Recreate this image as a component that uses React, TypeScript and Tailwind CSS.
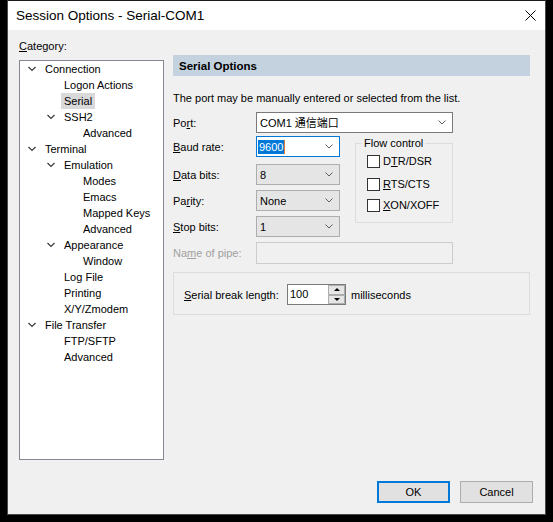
import React from 'react';

type TreeItem = { label: string; level: 0 | 1 | 2; chevron?: boolean; selected?: boolean };

const tree: TreeItem[] = [
    { label: 'Connection', level: 0, chevron: true },
    { label: 'Logon Actions', level: 1 },
    { label: 'Serial', level: 1, selected: true },
    { label: 'SSH2', level: 1, chevron: true },
    { label: 'Advanced', level: 2 },
    { label: 'Terminal', level: 0, chevron: true },
    { label: 'Emulation', level: 1, chevron: true },
    { label: 'Modes', level: 2 },
    { label: 'Emacs', level: 2 },
    { label: 'Mapped Keys', level: 2 },
    { label: 'Advanced', level: 2 },
    { label: 'Appearance', level: 1, chevron: true },
    { label: 'Window', level: 2 },
    { label: 'Log File', level: 1 },
    { label: 'Printing', level: 1 },
    { label: 'X/Y/Zmodem', level: 1 },
    { label: 'File Transfer', level: 0, chevron: true },
    { label: 'FTP/SFTP', level: 1 },
    { label: 'Advanced', level: 1 },
];

const indent = { 0: 'pl-[8px]', 1: 'pl-[27px]', 2: 'pl-[46px]' };

const TreeChevron = () => (
    <svg width="8" height="6" viewBox="0 0 8 6" className="block">
        <polyline points="0.5,1 4,4.5 7.5,1" fill="none" stroke="#3a3a3a" strokeWidth="1.2" />
    </svg>
);

const ComboChevron = () => (
    <svg width="8" height="5" viewBox="0 0 8 5" className="block">
        <polyline points="0.5,0.5 4,4 7.5,0.5" fill="none" stroke="#606060" strokeWidth="1" />
    </svg>
);

// read-only combo box, grey like a Win10 dropdown list
const Combo = ({ value, className }: { value: string; className: string }) => (
    <div className={`h-[21px] flex items-center justify-between pl-[3px] pr-[6px] border border-[#adadad] bg-[#e5e5e5] ${className}`}>
        <span>{value}</span>
        <ComboChevron />
    </div>
);

const Row = ({ label, children, className = '' }: { label: React.ReactNode; children: React.ReactNode; className?: string }) => (
    <div className={`flex items-center ${className}`}>
        <div className="w-[83px] shrink-0">{label}</div>
        {children}
    </div>
);

const Check = ({ children, className = '' }: { children: React.ReactNode; className?: string }) => (
    <div className={`h-4 flex items-center ${className}`}>
        <div className="w-[13px] h-[13px] border border-[#333333] bg-white shrink-0" />
        <span className="ml-[3px]">{children}</span>
    </div>
);

export default function App() {
    return (
        <div
            className="w-[553px] h-[522px] bg-black overflow-hidden text-[11px] leading-4 text-black"
            style={{ fontFamily: '"Liberation Sans", "Noto Sans CJK SC", sans-serif' }}
        >
            <div className="ml-[7px] w-[539px] h-[515px] border border-[#4a4a4a] border-t-[#1a1a1a] bg-[#f0f0f0] flex flex-col">
                {/* Title bar */}
                <div className="h-[29px] bg-white flex items-center justify-between pl-[8px] pr-[9px] shrink-0">
                    <span className="text-[13.5px]">Session Options - Serial-COM1</span>
                    <svg width="11" height="11" viewBox="0 0 11 11" className="block">
                        <path d="M0.5 0.5 L10.5 10.5 M10.5 0.5 L0.5 10.5" stroke="#000" strokeWidth="1" />
                    </svg>
                </div>

                <div className="flex-1 flex pl-[11px]">
                    {/* Category tree */}
                    <div className="w-[145px] shrink-0">
                        <div className="mt-[8px] h-4">
                            <span className="underline">C</span>ategory:
                        </div>
                        <div className="mt-[6px] h-[400px] border border-[#828790] bg-white">
                            {tree.map((item, i) => (
                                <div key={i} className={`h-4 flex items-center ${indent[item.level]}`}>
                                    <div className="w-[14px] shrink-0">{item.chevron && <TreeChevron />}</div>
                                    <span className={`px-[3px] h-4 ${item.selected ? 'bg-[#d9d9d9]' : ''}`}>{item.label}</span>
                                </div>
                            ))}
                        </div>
                    </div>

                    {/* Serial options */}
                    <div className="ml-[9px] w-[357px]">
                        <div className="mt-[25px] h-[21px] bg-[#c4d2df] flex items-center pl-[6px]">
                            <span className="font-bold text-[11.5px]">Serial Options</span>
                        </div>
                        <div className="mt-[14px] h-4">The port may be manually entered or selected from the list.</div>

                        <Row
                            className="mt-[6px]"
                            label={
                                <>
                                    Po<span className="underline">r</span>t:
                                </>
                            }
                        >
                            <div className="w-[197px] h-[21px] flex items-center justify-between pl-[3px] pr-[6px] border border-[#7a7a7a] bg-white">
                                <span>COM1 通信端口</span>
                                <ComboChevron />
                            </div>
                        </Row>

                        <div className="flex">
                            <div>
                                <Row
                                    className="mt-[3px]"
                                    label={
                                        <>
                                            <span className="underline">B</span>aud rate:
                                        </>
                                    }
                                >
                                    <div className="w-[84px] h-[21px] flex items-center justify-between pl-[1px] pr-[6px] border border-[#0078d7] bg-white">
                                        <div className="flex items-center">
                                            <span className="bg-[#0078d7] text-white px-[1px] h-[14px] leading-[14px]">9600</span>
                                            <span className="w-px h-[14px] bg-[#e07a2c]" />
                                        </div>
                                        <ComboChevron />
                                    </div>
                                </Row>
                                <Row
                                    className="mt-[7px]"
                                    label={
                                        <>
                                            <span className="underline">D</span>ata bits:
                                        </>
                                    }
                                >
                                    <Combo value="8" className="w-[84px]" />
                                </Row>
                                <Row
                                    className="mt-[5px]"
                                    label={
                                        <>
                                            Pa<span className="underline">r</span>ity:
                                        </>
                                    }
                                >
                                    <Combo value="None" className="w-[84px]" />
                                </Row>
                                <Row
                                    className="mt-[5px]"
                                    label={
                                        <>
                                            <span className="underline">S</span>top bits:
                                        </>
                                    }
                                >
                                    <Combo value="1" className="w-[84px]" />
                                </Row>
                            </div>

                            {/* Flow control group */}
                            <div className="relative ml-[15px] mt-[10px] w-[98px] h-[80px] border border-[#dcdcdc] pt-[9px] pl-[11px]">
                                <span className="absolute -top-[9px] left-[6px] px-[2px] bg-[#f0f0f0]">Flow control</span>
                                <Check>
                                    D<span className="underline">T</span>R/DSR
                                </Check>
                                <Check className="mt-[7px]">
                                    <span className="underline">R</span>TS/CTS
                                </Check>
                                <Check className="mt-[5px]">
                                    <span className="underline">X</span>ON/XOFF
                                </Check>
                            </div>
                        </div>

                        <Row
                            className="mt-[5px] text-[#a0a0a0]"
                            label={
                                <>
                                    Na<span className="underline">m</span>e of pipe:
                                </>
                            }
                        >
                            <div className="w-[197px] h-[22px] border border-[#cccccc] bg-[#f0f0f0]" />
                        </Row>

                        {/* Serial break group */}
                        <div className="mt-[8px] h-[43px] border border-[#dcdcdc] pl-[10px] pt-[11px] flex items-start">
                            <div className="h-[21px] flex items-center w-[103px]">
                                <span>
                                    <span className="underline">S</span>erial break length:
                                </span>
                            </div>
                            <div className="h-[21px] w-[59px] flex border border-[#7a7a7a] bg-white">
                                <span className="flex-1 pl-[2px] leading-[19px]">100</span>
                                <div className="w-[17px] flex flex-col">
                                    <div className="flex-1 border border-[#adadad] bg-[#e5e5e5] flex items-center justify-center">
                                        <div className="w-0 h-0 border-l-[3px] border-r-[3px] border-b-[3px] border-l-transparent border-r-transparent border-b-black" />
                                    </div>
                                    <div className="flex-1 border border-[#adadad] bg-[#e5e5e5] flex items-center justify-center">
                                        <div className="w-0 h-0 border-l-[3px] border-r-[3px] border-t-[3px] border-l-transparent border-r-transparent border-t-black" />
                                    </div>
                                </div>
                            </div>
                            <div className="h-[21px] flex items-center ml-[5px]">milliseconds</div>
                        </div>
                    </div>
                </div>

                {/* Dialog buttons */}
                <div className="flex justify-end gap-[10px] pr-[12px] pb-[11px] shrink-0">
                    <button className="w-[73px] h-[22px] border-2 border-[#0078d7] bg-[#e1e1e1] text-[11px]">OK</button>
                    <button className="w-[73px] h-[22px] border border-[#adadad] bg-[#e1e1e1] text-[11px]">Cancel</button>
                </div>
            </div>
        </div>
    );
}
